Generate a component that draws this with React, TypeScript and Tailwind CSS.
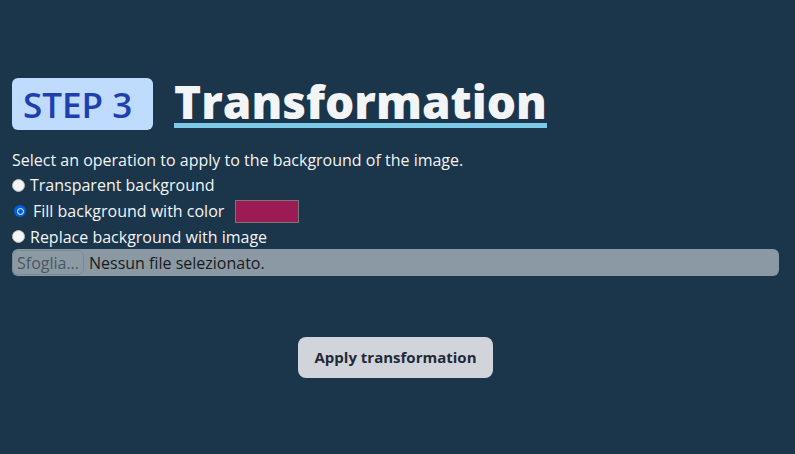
import React from "react";

export default function App() {
  const font = { fontFamily: '"Open Sans", "Noto Sans", sans-serif' };
  return (
    <div className="min-h-[454px] w-full bg-[#1b354a] pl-3 pr-4 pt-[78px] text-[#f3f4f6]" style={font}>
      <div className="flex items-start gap-[21px]">
        <div className="flex h-[52px] w-[141px] items-center rounded-md bg-[#bfdbfe] pl-[11px] text-[35px] font-semibold leading-none text-[#1e40af]">
          STEP 3
        </div>
        <div className="flex flex-col pt-[1px]">
          <h1 className="text-[46px] font-extrabold leading-[44px] text-[#f3f4f6]">Transformation</h1>
          <div className="h-[5px] w-full bg-[#7dcbe8]"></div>
        </div>
      </div>
      <p className="mt-[18px] text-[16px] leading-[24px]">Select an operation to apply to the background of the image.</p>
      <div className="flex h-[26px] items-center gap-[5px]">
        <span className="h-[13px] w-[13px] rounded-full border border-[#bbb] bg-[#f5f5f5]"></span>
        <span className="text-[16px]">Transparent background</span>
      </div>
      <div className="flex h-[26px] items-center">
        <span className="ml-[2px] flex h-[12px] w-[12px] items-center justify-center rounded-full bg-[#0060df]">
          <span className="h-[7px] w-[7px] rounded-full border-[1.5px] border-white bg-[#0060df]"></span>
        </span>
        <span className="ml-[7px] text-[16px]">Fill background with color</span>
        <span className="ml-[11px] h-[23px] w-[64px] border border-[#777] bg-[#9c1b55]"></span>
      </div>
      <div className="flex h-[25px] items-center gap-[5px]">
        <span className="h-[13px] w-[13px] rounded-full border border-[#bbb] bg-[#f5f5f5]"></span>
        <span className="text-[16px]">Replace background with image</span>
      </div>
      <div className="flex h-[27px] items-center rounded-md bg-[#8a99a3]">
        <span className="flex h-[25px] w-[72px] items-center justify-center rounded-md border border-[#7a8994] bg-[#8c9aa4] text-[16px] text-[#4b5563]">
          Sfoglia...
        </span>
        <span className="ml-[5px] text-[16px] text-[#1a1a1a]">Nessun file selezionato.</span>
      </div>
      <div className="mt-[61px] flex justify-center">
        <button className="h-[41px] w-[195px] rounded-lg bg-[#d1d5db] text-[15px] font-bold text-[#1f2937]">
          Apply transformation
        </button>
      </div>
    </div>
  );
}
